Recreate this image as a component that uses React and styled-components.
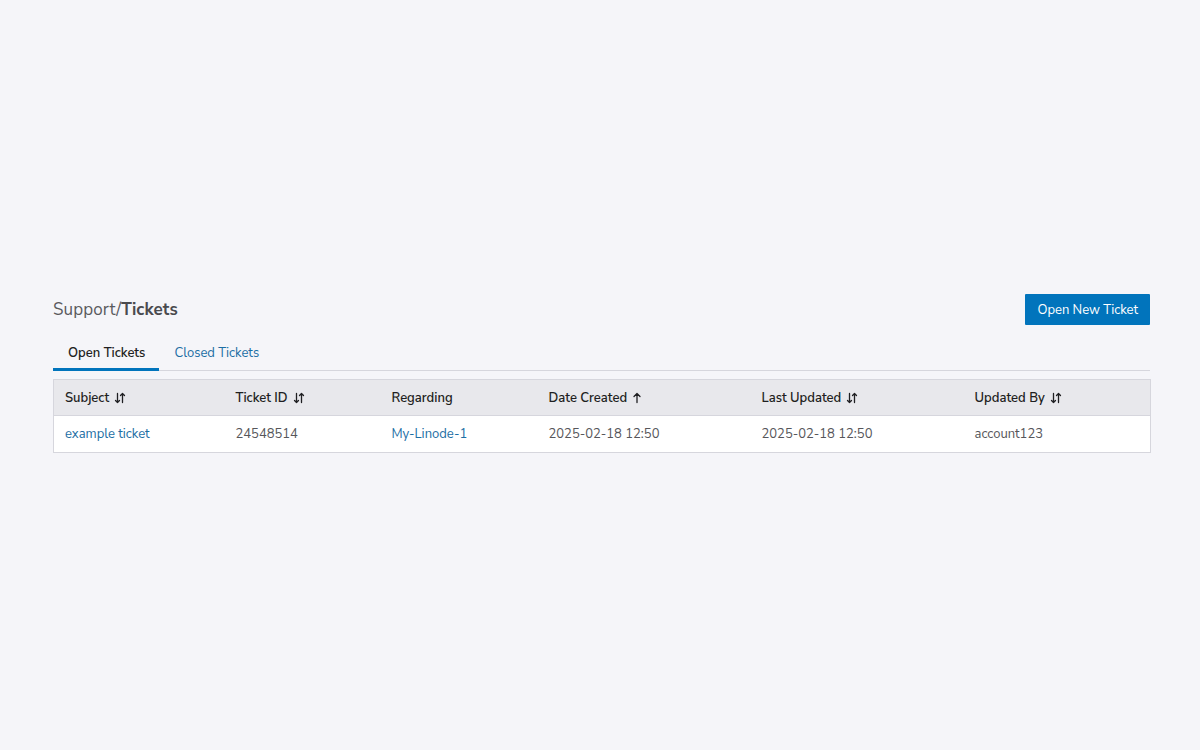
import React from "react";
import styled, { createGlobalStyle } from "styled-components";

const GlobalStyle = createGlobalStyle`
  html, body {
    margin: 0;
    padding: 0;
    background: #f5f5f9;
    font-family: "Nunito Sans", Lato, "Open Sans", sans-serif;
  }
`;

const Page = styled.div`
  min-height: 750px;
  box-sizing: border-box;
  padding: 294px 50px 0 53px;
`;

const Header = styled.div`
  display: flex;
  justify-content: space-between;
  align-items: center;
  height: 31px;
`;

const Crumb = styled.h1`
  margin: 0;
  font-size: 17px;
  font-weight: 400;
  color: #5a5a5e;
  letter-spacing: 0.1px;

  strong {
    font-weight: 700;
    color: #4a4a4e;
  }
`;

const PrimaryButton = styled.button`
  height: 31px;
  padding: 0 12px;
  border: none;
  border-radius: 1px;
  background: #0174bc;
  color: #fff;
  font-family: inherit;
  font-size: 13px;
  cursor: pointer;
`;

const TabBar = styled.div`
  display: flex;
  margin-top: 11px;
  border-bottom: 1px solid #d6d6dd;
`;

const Tab = styled.div`
  padding: 8px 14px 6px 15px;
  margin-bottom: -1px;
  font-size: 13px;
  font-weight: ${(p) => (p.$active ? 600 : 400)};
  color: ${(p) => (p.$active ? "#1f1f22" : "#1c6ea4")};
  border-bottom: 3px solid ${(p) => (p.$active ? "#0174bc" : "transparent")};
  cursor: pointer;
`;

const Table = styled.table`
  width: 100%;
  margin-top: 8px;
  border-collapse: collapse;
  border: 1px solid #d6d6dd;
  table-layout: fixed;
  font-size: 13px;
`;

const HeadCell = styled.th`
  box-sizing: border-box;
  height: 36px;
  padding: 0 11px;
  text-align: left;
  background: #e8e8ec;
  border-bottom: 1px solid #d6d6dd;
  color: #1f1f22;
  font-weight: 600;
  width: ${(p) => p.$w}px;
`;

const HeadInner = styled.span`
  display: inline-flex;
  align-items: center;
  gap: 5px;
`;

const Cell = styled.td`
  box-sizing: border-box;
  height: 37px;
  padding: 0 11px;
  background: #fff;
  color: ${(p) => (p.$link ? "#1c6ea4" : "#56565a")};
`;

const SortBoth = () => (
  <svg width="12" height="12" viewBox="0 0 12 12" fill="none" stroke="#1f1f22" strokeWidth="1.3" strokeLinecap="round" strokeLinejoin="round">
    <path d="M3.5 1.5v9M1.5 8.5l2 2 2-2" />
    <path d="M8.5 10.5v-9M6.5 3.5l2-2 2 2" />
  </svg>
);

const SortUp = () => (
  <svg width="10" height="12" viewBox="0 0 10 12" fill="none" stroke="#1f1f22" strokeWidth="1.3" strokeLinecap="round" strokeLinejoin="round">
    <path d="M5 10.5v-9M2 4.5l3-3 3 3" />
  </svg>
);

const columns = [
  { label: "Subject", w: 171, sort: "both" },
  { label: "Ticket ID", w: 156, sort: "both" },
  { label: "Regarding", w: 157 },
  { label: "Date Created", w: 213, sort: "up" },
  { label: "Last Updated", w: 213, sort: "both" },
  { label: "Updated By", w: 187, sort: "both" },
];

const rows = [
  {
    subject: "example ticket",
    id: "24548514",
    regarding: "My-Linode-1",
    created: "2025-02-18 12:50",
    updated: "2025-02-18 12:50",
    by: "account123",
  },
];

export default function App() {
  return (
    <>
      <GlobalStyle />
      <Page>
        <Header>
          <Crumb>
            Support/<strong>Tickets</strong>
          </Crumb>
          <PrimaryButton>Open New Ticket</PrimaryButton>
        </Header>
        <TabBar>
          <Tab $active>Open Tickets</Tab>
          <Tab>Closed Tickets</Tab>
        </TabBar>
        <Table>
          <thead>
            <tr>
              {columns.map((c) => (
                <HeadCell key={c.label} $w={c.w}>
                  <HeadInner>
                    {c.label}
                    {c.sort === "both" && <SortBoth />}
                    {c.sort === "up" && <SortUp />}
                  </HeadInner>
                </HeadCell>
              ))}
            </tr>
          </thead>
          <tbody>
            {rows.map((r) => (
              <tr key={r.id}>
                <Cell $link>{r.subject}</Cell>
                <Cell>{r.id}</Cell>
                <Cell $link>{r.regarding}</Cell>
                <Cell>{r.created}</Cell>
                <Cell>{r.updated}</Cell>
                <Cell>{r.by}</Cell>
              </tr>
            ))}
          </tbody>
        </Table>
      </Page>
    </>
  );
}
